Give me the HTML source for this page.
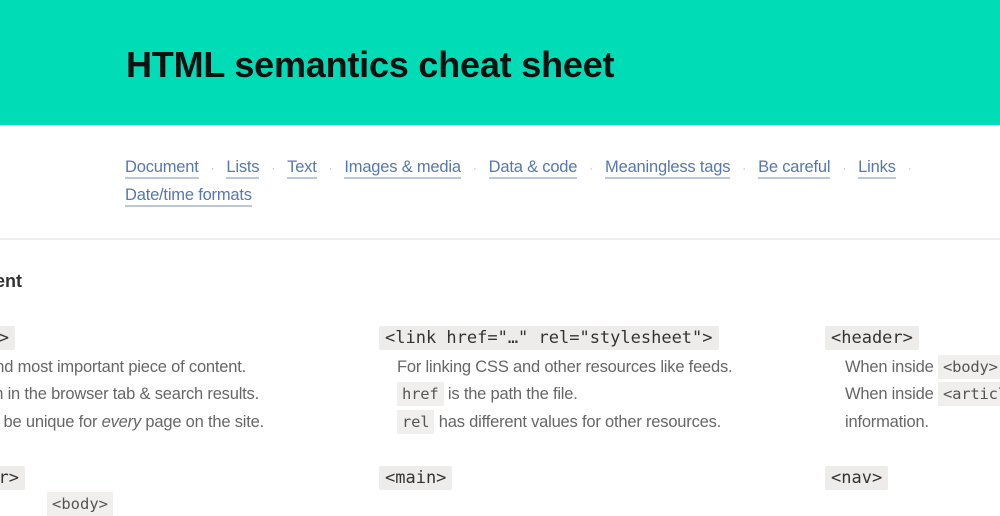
<!DOCTYPE html>
<html><head><meta charset="utf-8"><style>
body{margin:0;width:1000px;height:500px;overflow:hidden;background:#fff;font-family:"Liberation Sans",sans-serif;position:relative}
.hd{position:absolute;left:0;top:0;width:1000px;height:125px;background:#00dcb5}
.hd h1{position:absolute;left:126px;top:44px;margin:0;font-size:36px;letter-spacing:-0.2px;color:#111;font-weight:bold}
.nav{position:absolute;left:125px;top:154px;width:860px;font-size:16.5px;line-height:27px;color:#5877ad;letter-spacing:-0.2px}
.nav a{color:#5877ad;text-decoration:none;border-bottom:2px solid #b9c8e0;padding-bottom:1px}
.nav i{font-style:normal;color:#bbb;margin:0 12px;font-size:12px}
.hr{position:absolute;left:0;top:238px;width:1000px;height:2px;background:#eee}
.a{position:absolute;white-space:nowrap}
.c{font-family:"DejaVu Sans Mono",monospace;font-size:17px;background:#eeecea;color:#333;padding:2px 6px;border-radius:2px}
.t{font-size:16.5px;color:#666;letter-spacing:-0.2px}
.ic{font-family:"DejaVu Sans Mono",monospace;font-size:15.5px;background:#f1efed;color:#555;padding:3px 5px}
</style></head><body>
<div class="hd"><h1>HTML semantics cheat sheet</h1></div>
<div class="nav"><a>Document</a><i>·</i><a>Lists</a><i>·</i><a>Text</a><i>·</i><a>Images &amp; media</a><i>·</i><a>Data &amp; code</a><i>·</i><a>Meaningless tags</a><i>·</i><a>Be careful</a><i>·</i><a>Links</a><i>·</i><br><a>Date/time formats</a></div>
<div class="hr"></div>
<div class="a" style="right:978px;top:271px;font-size:18px;font-weight:bold;color:#333">Document</div>
<div class="a c" style="right:985px;top:326px">&lt;h1&gt;</div>
<div class="a t" style="right:754px;top:358px">The main and most important piece of content.</div>
<div class="a t" style="right:741px;top:385px">Shown in the browser tab &amp; search results.</div>
<div class="a t" style="right:736px;top:413px">Should be unique for <i>every</i> page on the site.</div>
<div class="a c" style="right:975px;top:466px">&lt;footer&gt;</div>
<div class="a ic" style="left:47px;top:492px">&lt;body&gt;</div>

<div class="a c" style="left:379px;top:326px">&lt;link href="…" rel="stylesheet"&gt;</div>
<div class="a t" style="left:397px;top:358px">For linking CSS and other resources like feeds.</div>
<div class="a t" style="left:397px;top:385px"><span class="ic">href</span> is the path the file.</div>
<div class="a t" style="left:397px;top:413px"><span class="ic">rel</span> has different values for other resources.</div>
<div class="a c" style="left:379px;top:466px">&lt;main&gt;</div>

<div class="a c" style="left:825px;top:326px">&lt;header&gt;</div>
<div class="a t" style="left:845px;top:358px">When inside <span class="ic">&lt;body&gt;</span></div>
<div class="a t" style="left:845px;top:385px">When inside <span class="ic">&lt;article&gt;</span></div>
<div class="a t" style="left:845px;top:413px">information.</div>
<div class="a c" style="left:825px;top:466px">&lt;nav&gt;</div>
</body></html>
